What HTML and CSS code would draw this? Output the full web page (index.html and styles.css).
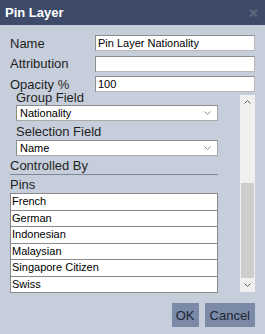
FILE: index.html
```html
<!DOCTYPE html>
<html>
<head>
<meta charset="utf-8">
<link rel="stylesheet" href="styles.css">
</head>
<body>
<div class="dialog">
  <div class="titlebar">
    <span class="title">Pin Layer</span>
    <svg class="close" width="9" height="8" viewBox="0 0 9 8"><path d="M1 0.5 L8 7.5 M8 0.5 L1 7.5" stroke="#5f677a" stroke-width="2"/></svg>
  </div>
  <div class="fields">
    <div class="row"><label class="lbl">Name</label><input class="inp" type="text" value="Pin Layer Nationality"></div>
    <div class="row"><label class="lbl">Attribution</label><input class="inp" type="text" value=""></div>
    <div class="row"><label class="lbl">Opacity %</label><input class="inp" type="text" value="100"></div>
  </div>
  <div class="scrollarea">
    <div class="viewport">
      <div class="inner">
        <div class="sublbl">Group Field</div>
        <div class="select"><span>Nationality</span><svg width="7" height="4" viewBox="0 0 7 4"><path d="M0.5 0.5 L3.5 3.5 L6.5 0.5" fill="none" stroke="#8a8a8a" stroke-width="1"/></svg></div>
        <div class="sublbl gap">Selection Field</div>
        <div class="select"><span>Name</span><svg width="7" height="4" viewBox="0 0 7 4"><path d="M0.5 0.5 L3.5 3.5 L6.5 0.5" fill="none" stroke="#8a8a8a" stroke-width="1"/></svg></div>
        <div class="section">Controlled By</div>
        <div class="pinslbl">Pins</div>
        <div class="list">
          <div class="item">French</div>
          <div class="item">German</div>
          <div class="item">Indonesian</div>
          <div class="item">Malaysian</div>
          <div class="item">Singapore Citizen</div>
          <div class="item">Swiss</div>
        </div>
      </div>
    </div>
    <div class="scrollbar">
      <div class="arrow"><svg width="7" height="4" viewBox="0 0 7 4"><path d="M0.5 3.5 L3.5 0.5 L6.5 3.5" fill="none" stroke="#606060" stroke-width="1"/></svg></div>
      <div class="track"><div class="thumb"></div></div>
      <div class="arrow"><svg width="7" height="4" viewBox="0 0 7 4"><path d="M0.5 0.5 L3.5 3.5 L6.5 0.5" fill="none" stroke="#606060" stroke-width="1"/></svg></div>
    </div>
  </div>
  <div class="buttons">
    <button class="btn ok">OK</button>
    <button class="btn">Cancel</button>
  </div>
</div>
</body>
</html>
```

FILE: styles.css
```css
* { box-sizing: border-box; }
html, body { margin: 0; padding: 0; }
body {
  width: 265px;
  height: 334px;
  background: #c6cedb;
  font-family: "Liberation Sans", Arial, sans-serif;
  overflow: hidden;
}
.dialog {
  display: flex;
  flex-direction: column;
  height: 334px;
}
.titlebar {
  height: 25px;
  background: #3d4a69;
  display: flex;
  align-items: center;
  justify-content: space-between;
  padding: 0 7px 0 5px;
}
.title {
  color: #ffffff;
  font-weight: bold;
  font-size: 13px;
  line-height: 25px;
}
.close { margin-top: 1px; }
.fields {
  padding: 10px 10px 0 10px;
  display: flex;
  flex-direction: column;
  gap: 4.5px;
}
.row {
  display: flex;
  align-items: center;
  height: 16px;
}
.lbl {
  width: 85px;
  font-size: 13px;
  color: #1f1f1f;
}
.inp {
  width: 160px;
  height: 16px;
  margin: 0;
  padding: 0 2px;
  border: 1px solid;
  border-color: #8d8d8d #b8b8b8 #b8b8b8 #8d8d8d;
  background: #ffffff;
  font-family: "Liberation Sans", Arial, sans-serif;
  font-size: 11px;
  color: #000;
  outline: none;
}
.scrollarea {
  margin: 0 10px 0 10px;
  height: 201px;
  display: flex;
}
.viewport {
  flex: 1;
  overflow: hidden;
}
.inner {
  margin-top: -2px;
  width: 208px;
}
.sublbl {
  font-size: 13px;
  line-height: 15px;
  color: #1f1f1f;
  padding-left: 6px;
}
.sublbl.gap { margin-top: 3px; line-height: 16px; }
.select {
  margin-left: 6px;
  width: 202px;
  height: 16px;
  background: #ffffff;
  border: 1px solid;
  border-color: #8d8d8d #a8a8a8 #a8a8a8 #8d8d8d;
  display: flex;
  align-items: center;
  justify-content: space-between;
  padding: 0 6px 0 3px;
  font-size: 11px;
  color: #000;
}
.section {
  margin-top: 2px;
  font-size: 13px;
  line-height: 16px;
  color: #1f1f1f;
  border-bottom: 1px solid #7f8794;
}
.pinslbl {
  margin-top: 2px;
  font-size: 13px;
  line-height: 16px;
  color: #1f1f1f;
}
.list {
  display: flex;
  flex-direction: column;
}
.item {
  height: 17.5px;
  margin-top: -1px;
  border: 1px solid #8a8a8a;
  background: #ffffff;
  font-size: 11px;
  line-height: 15px;
  padding-left: 1px;
  color: #000;
}
.item:first-child { margin-top: 0; }
.scrollbar {
  width: 15px;
  margin-top: 3px;
  height: 197px;
  background: #f0f0f0;
  display: flex;
  flex-direction: column;
}
.arrow {
  height: 14px;
  display: flex;
  align-items: center;
  justify-content: center;
}
.track {
  flex: 1;
  display: flex;
  flex-direction: column;
  justify-content: flex-end;
  padding: 0 1px;
}
.thumb {
  height: 95px;
  background: #cdcdcd;
}
.buttons {
  display: flex;
  justify-content: flex-end;
  gap: 6px;
  padding: 10px 10px 0 0;
}
.btn {
  height: 24px;
  margin: 0;
  border: none;
  background: #7b8aa7;
  color: #1c2533;
  font-family: "Liberation Sans", Arial, sans-serif;
  font-size: 13px;
  padding: 0 5px;
}
.btn.ok { width: 27px; padding: 0; }
```
